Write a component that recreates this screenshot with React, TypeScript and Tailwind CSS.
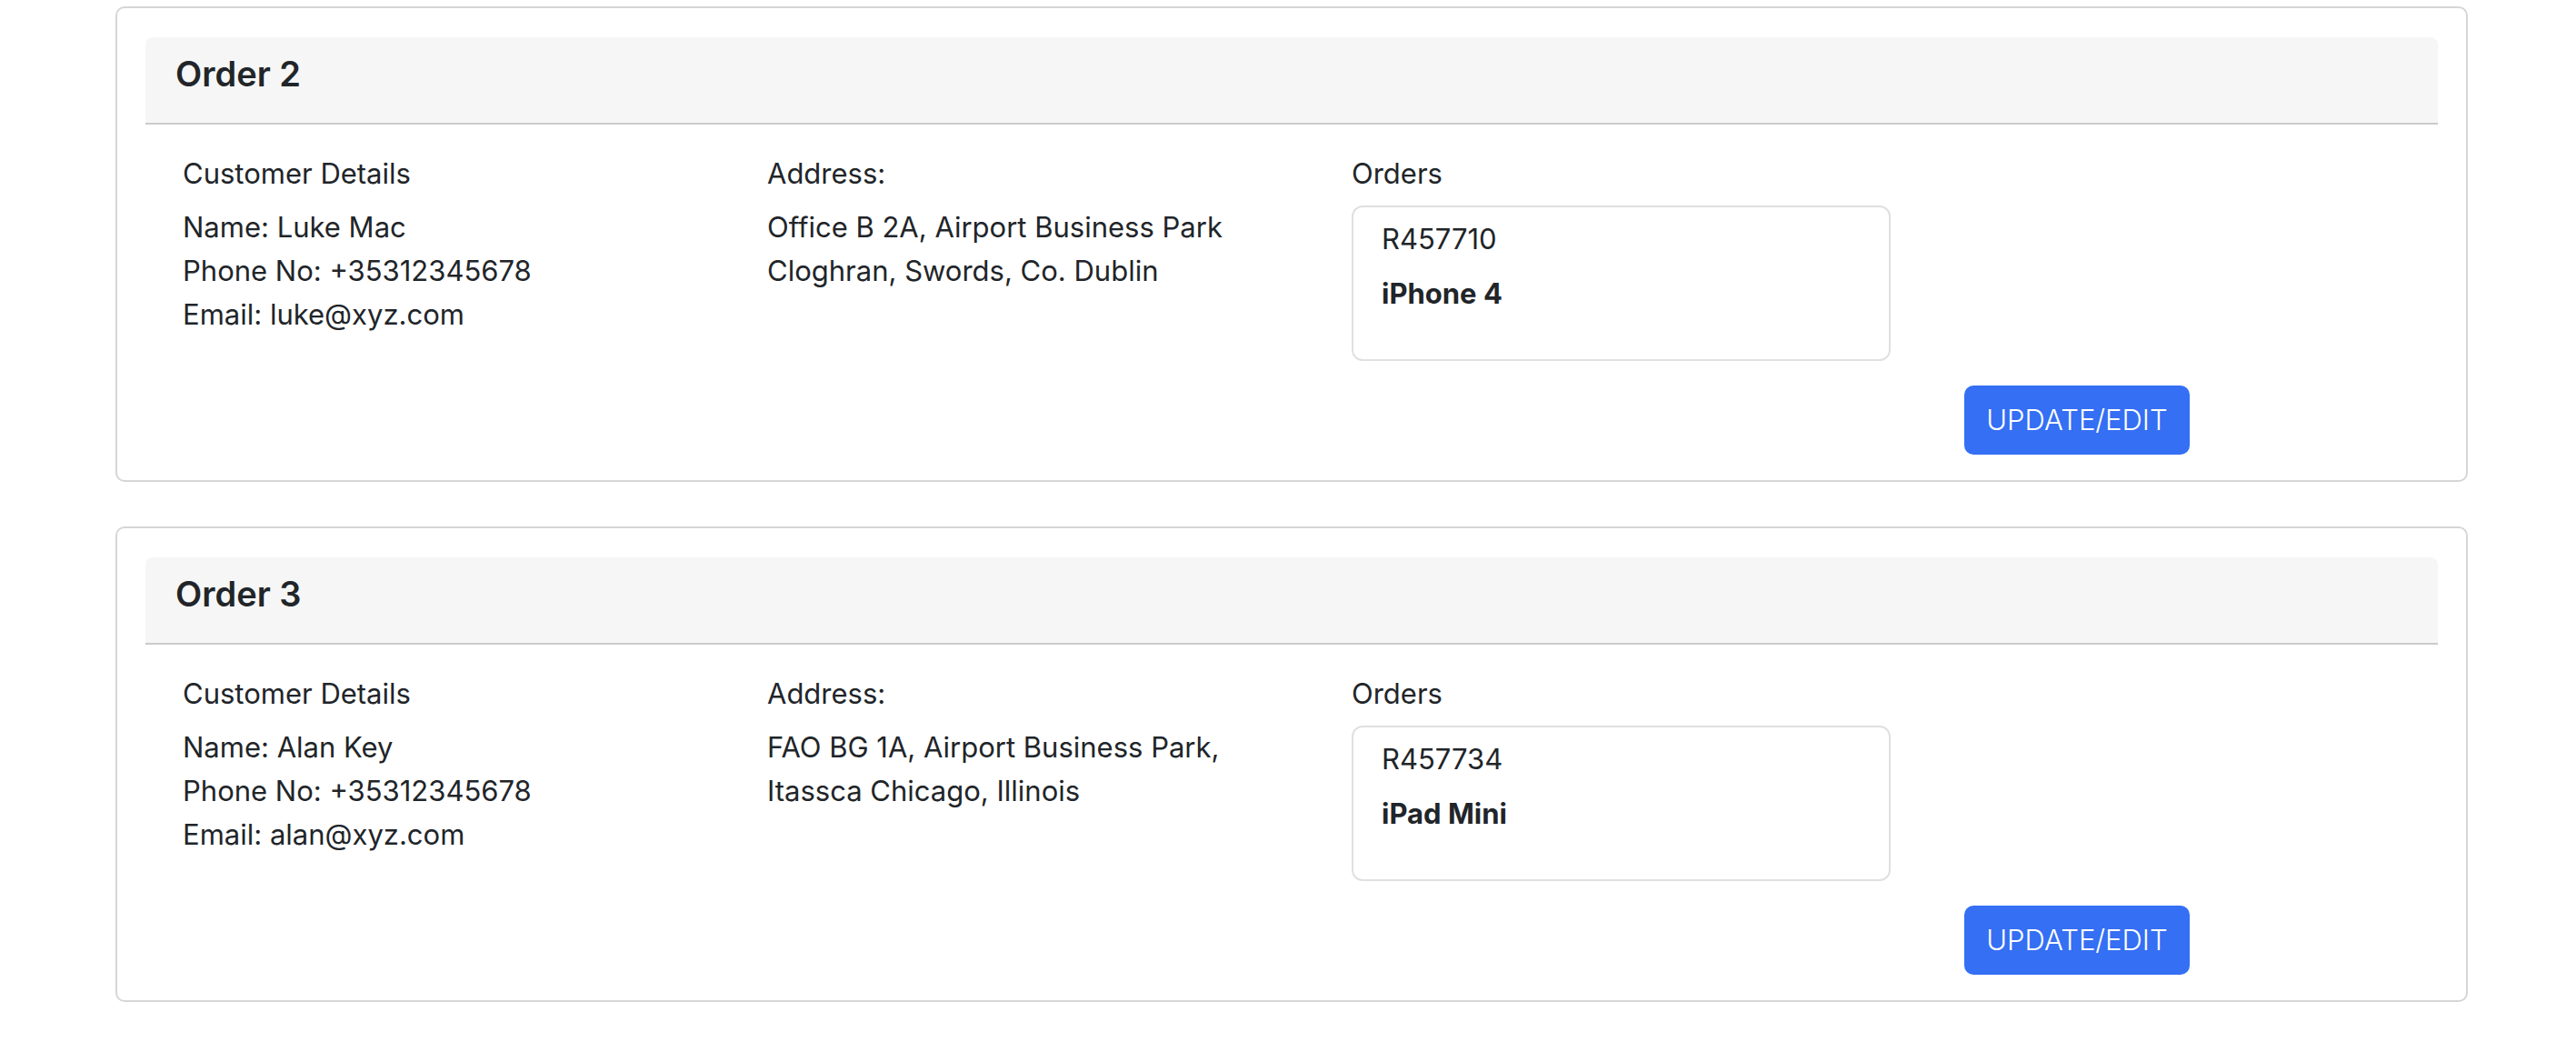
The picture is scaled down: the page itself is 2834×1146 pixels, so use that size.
const orders = [
  {
    title: "Order 2",
    name: "Luke Mac",
    phone: "+35312345678",
    email: "luke@xyz.com",
    address: ["Office B 2A, Airport Business Park", "Cloghran, Swords, Co. Dublin"],
    ref: "R457710",
    product: "iPhone 4",
  },
  {
    title: "Order 3",
    name: "Alan Key",
    phone: "+35312345678",
    email: "alan@xyz.com",
    address: ["FAO BG 1A, Airport Business Park,", "Itassca Chicago, Illinois"],
    ref: "R457734",
    product: "iPad Mini",
  },
];

type Order = (typeof orders)[number];

function OrderCard({ order }: { order: Order }) {
  return (
    <div className="rounded-[10px] border-2 border-[#d6d6d6] bg-white px-[31px] pb-[28px] pt-[32px]">
      {/* Header */}
      <div className="h-[96px] rounded-t-[8px] border-b-2 border-[#cbcbcb] bg-[#f6f6f6] px-[33px] pt-[16px]">
        <h5 className="text-[38px] font-semibold leading-[48px]">{order.title}</h5>
      </div>

      {/* Body: three columns */}
      <div className="grid grid-cols-[643px_643px_593px] pl-[41px] pt-[30px] text-[31px] leading-[48px]">
        <div>
          <p className="mb-[11px]">Customer Details</p>
          <p>Name: {order.name}</p>
          <p>Phone No: {order.phone}</p>
          <p>Email: {order.email}</p>
        </div>
        <div>
          <p className="mb-[11px]">Address:</p>
          {order.address.map((line) => (
            <p key={line}>{line}</p>
          ))}
        </div>
        <div>
          <p className="mb-[11px]">Orders</p>
          <div className="h-[171px] rounded-[12px] border-2 border-[#e0e0e0] pl-[31px] pt-[11px]">
            <p>{order.ref}</p>
            <p className="mt-[12px] font-bold">{order.product}</p>
          </div>
        </div>
      </div>

      {/* Action */}
      <div className="flex pl-[2001px] pt-[27px]">
        <button className="h-[76px] w-[248px] rounded-[10px] bg-[#346ff4] text-[31px] font-light text-white">
          UPDATE/EDIT
        </button>
      </div>
    </div>
  );
}

export default function App() {
  return (
    <div className="min-h-screen bg-white pt-[7px] font-['Inter',sans-serif] text-[#212529]">
      <div className="ml-[127px] flex w-[2588px] flex-col gap-[49px]">
        {orders.map((o) => (
          <OrderCard key={o.title} order={o} />
        ))}
      </div>
    </div>
  );
}
